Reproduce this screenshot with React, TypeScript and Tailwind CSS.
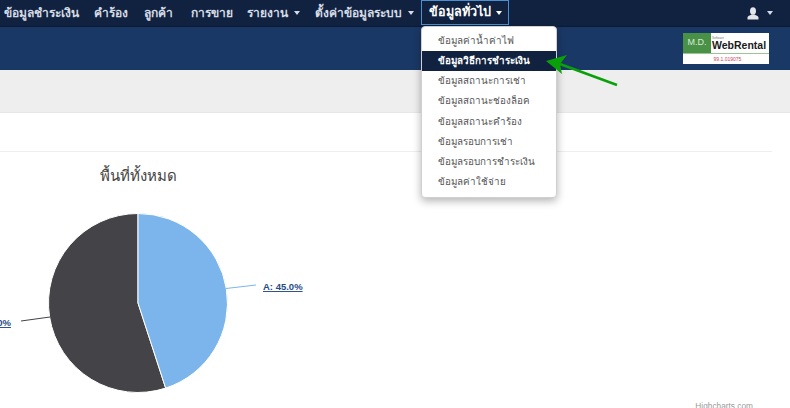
import React from 'react'

const font = { sans: 'font-["Liberation_Sans","Noto_Sans","DejaVu_Sans",sans-serif]' }

const menuItems = [
  'ข้อมูลค่าน้ำค่าไฟ',
  'ข้อมูลวิธีการชำระเงิน',
  'ข้อมูลสถานะการเช่า',
  'ข้อมูลสถานะช่องล็อค',
  'ข้อมูลสถานะคำร้อง',
  'ข้อมูลรอบการเช่า',
  'ข้อมูลรอบการชำระเงิน',
  'ข้อมูลค่าใช้จ่าย',
]

function Caret() {
  return <span className="ml-[6px] inline-block h-0 w-0 border-x-[3.5px] border-t-[4px] border-x-transparent border-t-[#d5dbe5]" />
}

function NavItem({ label, caret, width }: { label: string; caret?: boolean; width: string }) {
  return (
    <a className={`flex h-[26px] items-center whitespace-nowrap text-[12px] font-bold text-[#d5dbe5] ${width}`}>
      {label}
      {caret && <Caret />}
    </a>
  )
}

function NavBar() {
  return (
    <nav className="flex h-[26px] items-center bg-[#10223f] pl-[4px]">
      <NavItem label="ข้อมูลชำระเงิน" width="w-[90px]" />
      <NavItem label="คำร้อง" width="w-[50px]" />
      <NavItem label="ลูกค้า" width="w-[47px]" />
      <NavItem label="การขาย" width="w-[56px]" />
      <NavItem label="รายงาน" caret width="w-[68px]" />
      <NavItem label="ตั้งค่าข้อมูลระบบ" caret width="w-[106px]" />
      <a className="flex h-[25px] w-[88px] items-center justify-center self-start whitespace-nowrap border border-[#4d90d0] pl-[1px] text-[12.6px] font-bold text-white">
        ข้อมูลทั่วไป
        <span className="ml-[5px] inline-block h-0 w-0 border-x-[3.5px] border-t-[4px] border-x-transparent border-t-white" />
      </a>
      <div className="ml-auto flex items-center gap-[8px] pr-[17px]">
        <svg width="12" height="13" viewBox="0 0 12 13" fill="#e3e6ea">
          <ellipse cx="6" cy="4" rx="3" ry="3.8" />
          <path d="M0.5 12.5 V10.5 C0.5 9 3 8.6 4.4 7.5 H7.6 C9 8.6 11.5 9 11.5 10.5 V12.5 Z" />
        </svg>
        <span className="inline-block h-0 w-0 border-x-[3.5px] border-t-[4px] border-x-transparent border-t-[#d5dbe5]" />
      </div>
    </nav>
  )
}

function Logo() {
  return (
    <div className="flex h-[31px] w-[86px] flex-col bg-white">
      <div className="flex h-[21px] border-b border-[#9cc39a]">
        <div className="flex w-[28px] items-center justify-center bg-[#4a9148] text-[9px] text-[#d9ead8]">M.D.</div>
        <div className="flex flex-1 flex-col justify-center pl-[1px]">
          <span className="text-[3px] leading-[4px] text-[#777777]">Software</span>
          <span className="text-[10.5px] leading-[11px] font-bold text-[#1a1a1a]">WebRental</span>
        </div>
      </div>
      <div className="flex flex-1 items-center justify-center pl-[3px] text-[5px] leading-none text-[#c8485a]">99.1.019075</div>
    </div>
  )
}

function DropdownMenu() {
  return (
    <div className="absolute top-[26px] left-[421px] w-[136px] rounded-[4px] border border-[#d0d0d0] bg-white py-[4px] shadow-[0_3px_8px_rgba(0,0,0,0.3)]">
      {menuItems.map((item, i) => (
        <div
          key={item}
          className={`flex h-[20.2px] items-center pl-[16px] text-[9.8px] whitespace-nowrap ${
            i === 1 ? 'bg-[#10223f] font-bold text-white' : 'text-[#555555]'
          }`}
        >
          {item}
        </div>
      ))}
    </div>
  )
}

function PieChart() {
  return (
    <svg width="790" height="256" viewBox="0 152 790 256" className="block">
      <text x="138" y="181" textAnchor="middle" fontSize="15" fill="#444444">พื้นที่ทั้งหมด</text>
      <path d="M138 213.500 A89.500 89.500 0 1 0 165.660 388.120 L138 303 Z" fill="#434348" stroke="#ffffff" strokeWidth="1" />
      <path d="M138 213.500 A89.500 89.500 0 0 1 165.660 388.120 L138 303 Z" fill="#7cb5ec" stroke="#ffffff" strokeWidth="1" />
      <path d="M226 288.500 L256 285" stroke="#7cb5ec" strokeWidth="1" fill="none" />
      <path d="M50 317 L21 321" stroke="#434348" strokeWidth="1" fill="none" />
      <text x="263" y="290" fontSize="9.500" fontWeight="bold" fill="#274b85" textDecoration="underline">A: 45.0%</text>
      <text x="11" y="326" textAnchor="end" fontSize="9.500" fontWeight="bold" fill="#274b85" textDecoration="underline">B: 55.0%</text>
      <text x="753" y="409" textAnchor="end" fontSize="8.300" fill="#999999">Highcharts.com</text>
    </svg>
  )
}

export default function App() {
  return (
    <div className={`relative h-[408px] w-[790px] overflow-hidden bg-white ${font.sans}`}>
      <NavBar />
      <div className="flex h-[44px] items-start justify-end border-t border-[#0c1b33] bg-[#1a3866] pt-[6px] pr-[21px]">
        <Logo />
      </div>
      <div className="h-[43px] border-b border-[#e7e7e7] bg-[#eeeeee]" />
      <div className="mt-[38px] h-px w-[772px] bg-[#eeeeee]" />
      <PieChart />
      <DropdownMenu />
      {/* green arrow pointing at the selected menu row */}
      <svg className="absolute top-[50px] left-[540px]" width="85" height="40" viewBox="0 0 85 40">
        <path d="M77 35 L20 14" stroke="#0aa00a" strokeWidth="2.500" fill="none" />
        <path d="M6 11 L27 5 L20 14 L22 24 Z" fill="#0aa00a" />
      </svg>
    </div>
  )
}
